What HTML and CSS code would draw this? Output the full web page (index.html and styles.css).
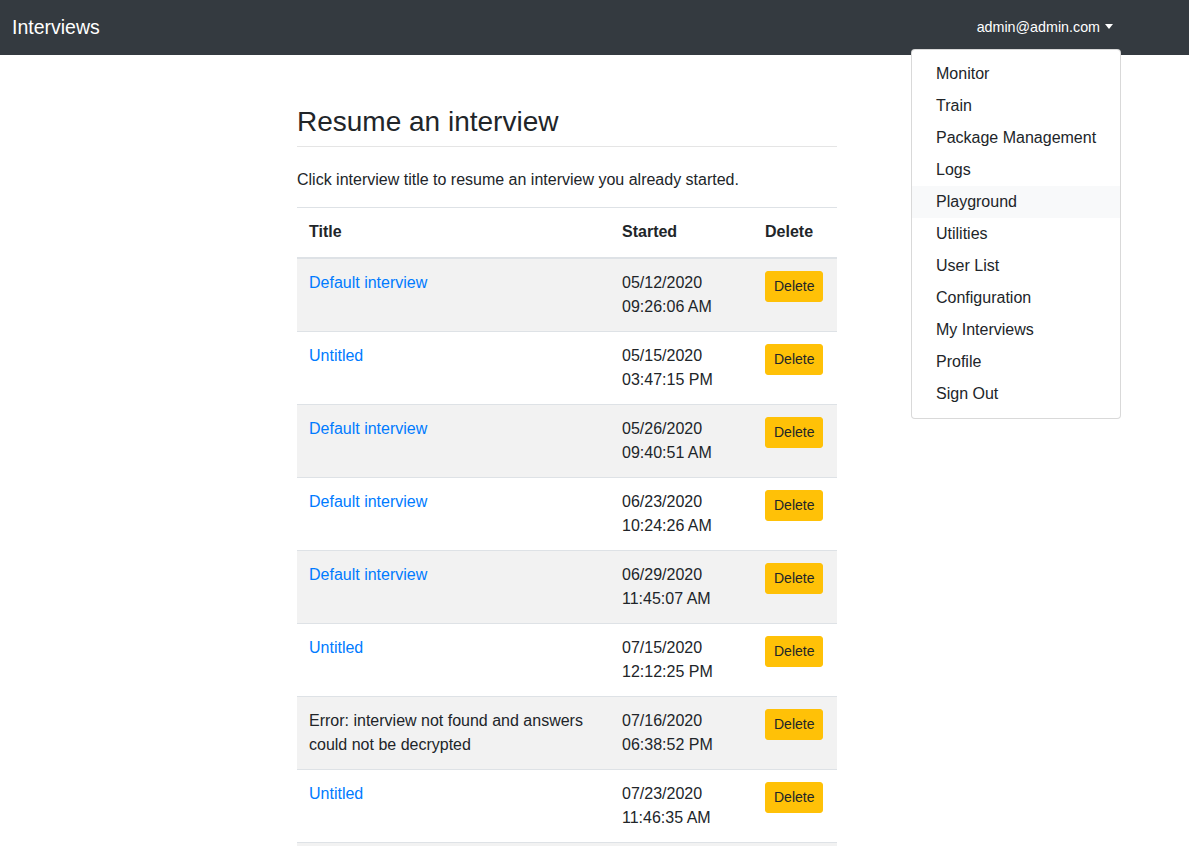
FILE: index.html
```html
<!DOCTYPE html>
<html lang="en">
<head>
    <meta charset="utf-8">
    <title>Interviews</title>
    <link rel="stylesheet" href="styles.css">
</head>
<body>
<nav class="navbar">
    <a class="brand" href="#">Interviews</a>
    <div class="user-menu">
        <a class="user-toggle" href="#">admin@admin.com<span class="caret"></span></a>
        <div class="dropdown">
            <a class="dropdown-item" href="#">Monitor</a>
            <a class="dropdown-item" href="#">Train</a>
            <a class="dropdown-item" href="#">Package Management</a>
            <a class="dropdown-item" href="#">Logs</a>
            <a class="dropdown-item hover" href="#">Playground</a>
            <a class="dropdown-item" href="#">Utilities</a>
            <a class="dropdown-item" href="#">User List</a>
            <a class="dropdown-item" href="#">Configuration</a>
            <a class="dropdown-item" href="#">My Interviews</a>
            <a class="dropdown-item" href="#">Profile</a>
            <a class="dropdown-item" href="#">Sign Out</a>
        </div>
    </div>
</nav>
<main class="content">
    <h1 class="page-title">Resume an interview</h1>
    <p class="lead">Click interview title to resume an interview you already started.</p>
    <table class="interviews">
        <thead>
            <tr><th class="col-title">Title</th><th class="col-started">Started</th><th>Delete</th></tr>
        </thead>
        <tbody>
            <tr><td><a href="#">Default interview</a></td><td>05/12/2020<br>09:26:06 AM</td><td><button class="btn-delete">Delete</button></td></tr>
            <tr><td><a href="#">Untitled</a></td><td>05/15/2020<br>03:47:15 PM</td><td><button class="btn-delete">Delete</button></td></tr>
            <tr><td><a href="#">Default interview</a></td><td>05/26/2020<br>09:40:51 AM</td><td><button class="btn-delete">Delete</button></td></tr>
            <tr><td><a href="#">Default interview</a></td><td>06/23/2020<br>10:24:26 AM</td><td><button class="btn-delete">Delete</button></td></tr>
            <tr><td><a href="#">Default interview</a></td><td>06/29/2020<br>11:45:07 AM</td><td><button class="btn-delete">Delete</button></td></tr>
            <tr><td><a href="#">Untitled</a></td><td>07/15/2020<br>12:12:25 PM</td><td><button class="btn-delete">Delete</button></td></tr>
            <tr><td>Error: interview not found and answers could not be decrypted</td><td>07/16/2020<br>06:38:52 PM</td><td><button class="btn-delete">Delete</button></td></tr>
            <tr><td><a href="#">Untitled</a></td><td>07/23/2020<br>11:46:35 AM</td><td><button class="btn-delete">Delete</button></td></tr>
            <tr><td><a href="#">Default interview</a></td><td>07/28/2020<br>02:15:40 PM</td><td><button class="btn-delete">Delete</button></td></tr>
        </tbody>
    </table>
</main>
</body>
</html>
```

FILE: styles.css
```css
html { font-family: "Liberation Sans", Arial, sans-serif; }
body {
    margin: 0;
    font-size: 16px;
    line-height: 1.5;
    color: #212529;
    background: #fff;
}
a { text-decoration: none; }

.navbar {
    display: flex;
    align-items: center;
    justify-content: space-between;
    height: 55px;
    padding: 0 68px 0 12px;
    background: #343a40;
}
.brand {
    color: #fff;
    font-size: 19.5px;
    line-height: 30px;
    margin-top: -2px;
}
.user-menu { position: relative; }
.user-toggle {
    display: block;
    padding: 8px;
    color: #fff;
    font-size: 14.3px;
}
.caret {
    display: inline-block;
    margin-left: 5px;
    vertical-align: 3px;
    border-top: 5px solid #fff;
    border-left: 4px solid transparent;
    border-right: 4px solid transparent;
}
.dropdown {
    position: absolute;
    right: 0;
    top: 40px;
    width: 208px;
    padding: 8px 0;
    background: #fff;
    border: 1px solid rgba(0,0,0,.15);
    border-radius: 4px;
    z-index: 10;
}
.dropdown-item {
    display: block;
    padding: 4px 24px;
    color: #212529;
    white-space: nowrap;
}
.dropdown-item.hover { background: #f8f9fa; }

.content {
    width: 540px;
    margin-left: 297px;
    padding-top: 50px;
}
.page-title {
    margin: 0 0 21px;
    padding-bottom: 7px;
    border-bottom: 1px solid #e5e5e5;
    font-size: 28px;
    font-weight: 500;
    line-height: 1.2;
}
.lead { margin: 0 0 15px; }

.interviews {
    width: 100%;
    border-collapse: collapse;
}
.interviews th,
.interviews td {
    padding: 12px;
    vertical-align: top;
    text-align: left;
    border-top: 1px solid #dee2e6;
}
.interviews thead th {
    padding-bottom: 13px;
    border-bottom: 2px solid #dee2e6;
    font-weight: bold;
}
.col-title { width: 289px; }
.col-started { width: 119px; }
.interviews tbody tr:nth-of-type(odd) { background: rgba(0,0,0,.05); }
.interviews a { color: #007bff; }
.btn-delete {
    display: block;
    padding: 4px 8px;
    font-family: inherit;
    font-size: 14px;
    line-height: 1.5;
    color: #212529;
    background: #ffc107;
    border: 1px solid #ffc107;
    border-radius: 3px;
}
```
